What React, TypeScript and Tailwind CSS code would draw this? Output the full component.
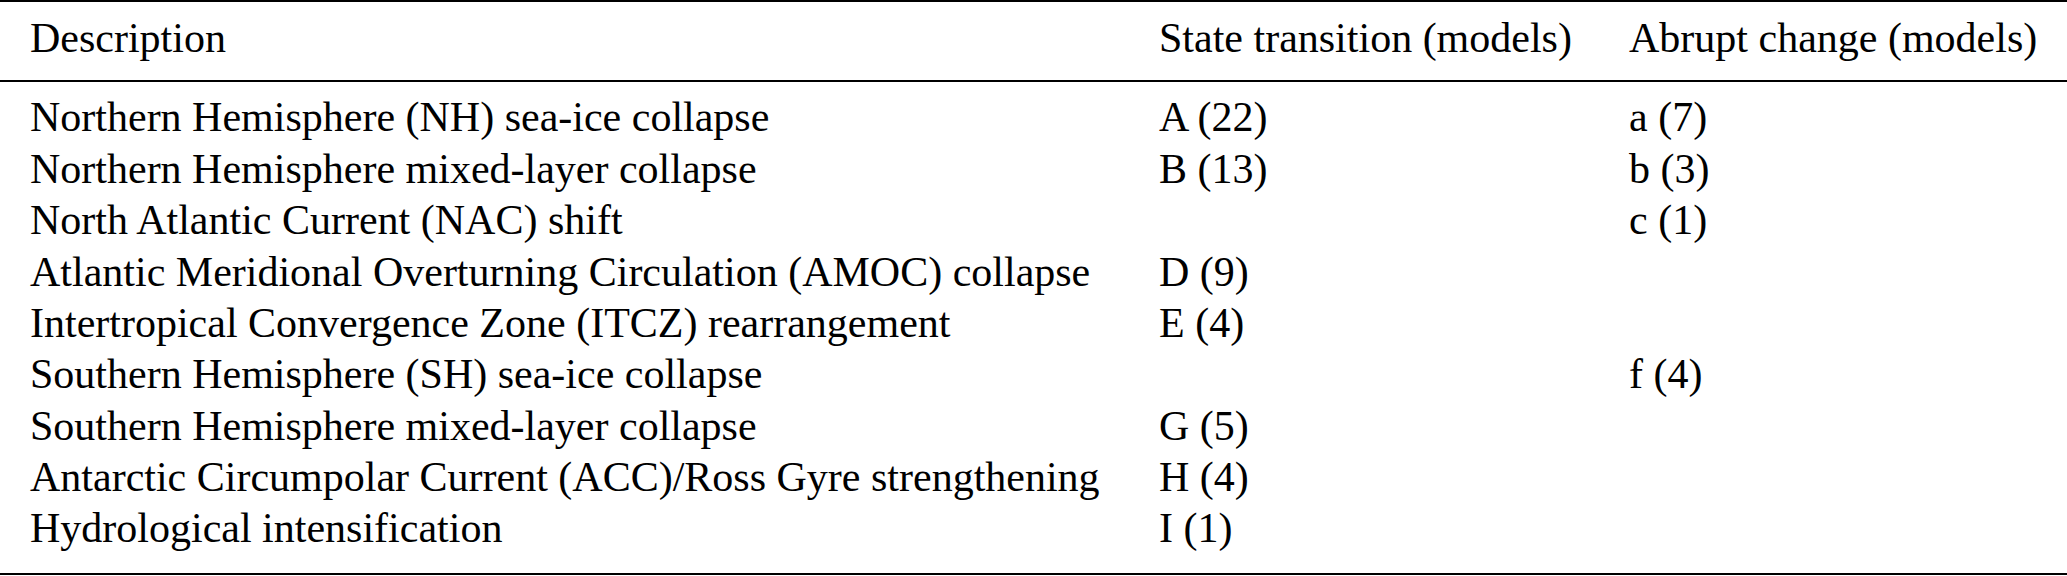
const rows: [string, string, string][] = [
  ['Northern Hemisphere (NH) sea-ice collapse', 'A (22)', 'a (7)'],
  ['Northern Hemisphere mixed-layer collapse', 'B (13)', 'b (3)'],
  ['North Atlantic Current (NAC) shift', '', 'c (1)'],
  ['Atlantic Meridional Overturning Circulation (AMOC) collapse', 'D (9)', ''],
  ['Intertropical Convergence Zone (ITCZ) rearrangement', 'E (4)', ''],
  ['Southern Hemisphere (SH) sea-ice collapse', '', 'f (4)'],
  ['Southern Hemisphere mixed-layer collapse', 'G (5)', ''],
  ['Antarctic Circumpolar Current (ACC)/Ross Gyre strengthening', 'H (4)', ''],
  ['Hydrological intensification', 'I (1)', ''],
]

const cols = 'grid grid-cols-[1129px_471px_467px]'

export default function App() {
  return (
    <div className="w-[2067px] h-[576px] bg-white text-black">
      <div className="font-['Liberation_Serif',serif] text-[42px] leading-[51.375px] border-t-2 border-b-2 border-black">
        {/* header */}
        <div className={`${cols} pt-[11px] pb-[16px] border-b-2 border-black`}>
          <div className="pl-[30px] whitespace-nowrap">Description</div>
          <div className="pl-[30px] whitespace-nowrap">State transition (models)</div>
          <div className="pl-[29px] whitespace-nowrap">Abrupt change (models)</div>
        </div>
        {/* body */}
        <div className="pt-[10px] pb-[18px]">
          {rows.map(([desc, state, abrupt]) => (
            <div key={desc} className={cols}>
              <div className="pl-[30px] whitespace-nowrap">{desc}</div>
              <div className="pl-[30px] whitespace-nowrap">{state}</div>
              <div className="pl-[29px] whitespace-nowrap">{abrupt}</div>
            </div>
          ))}
        </div>
      </div>
    </div>
  )
}
